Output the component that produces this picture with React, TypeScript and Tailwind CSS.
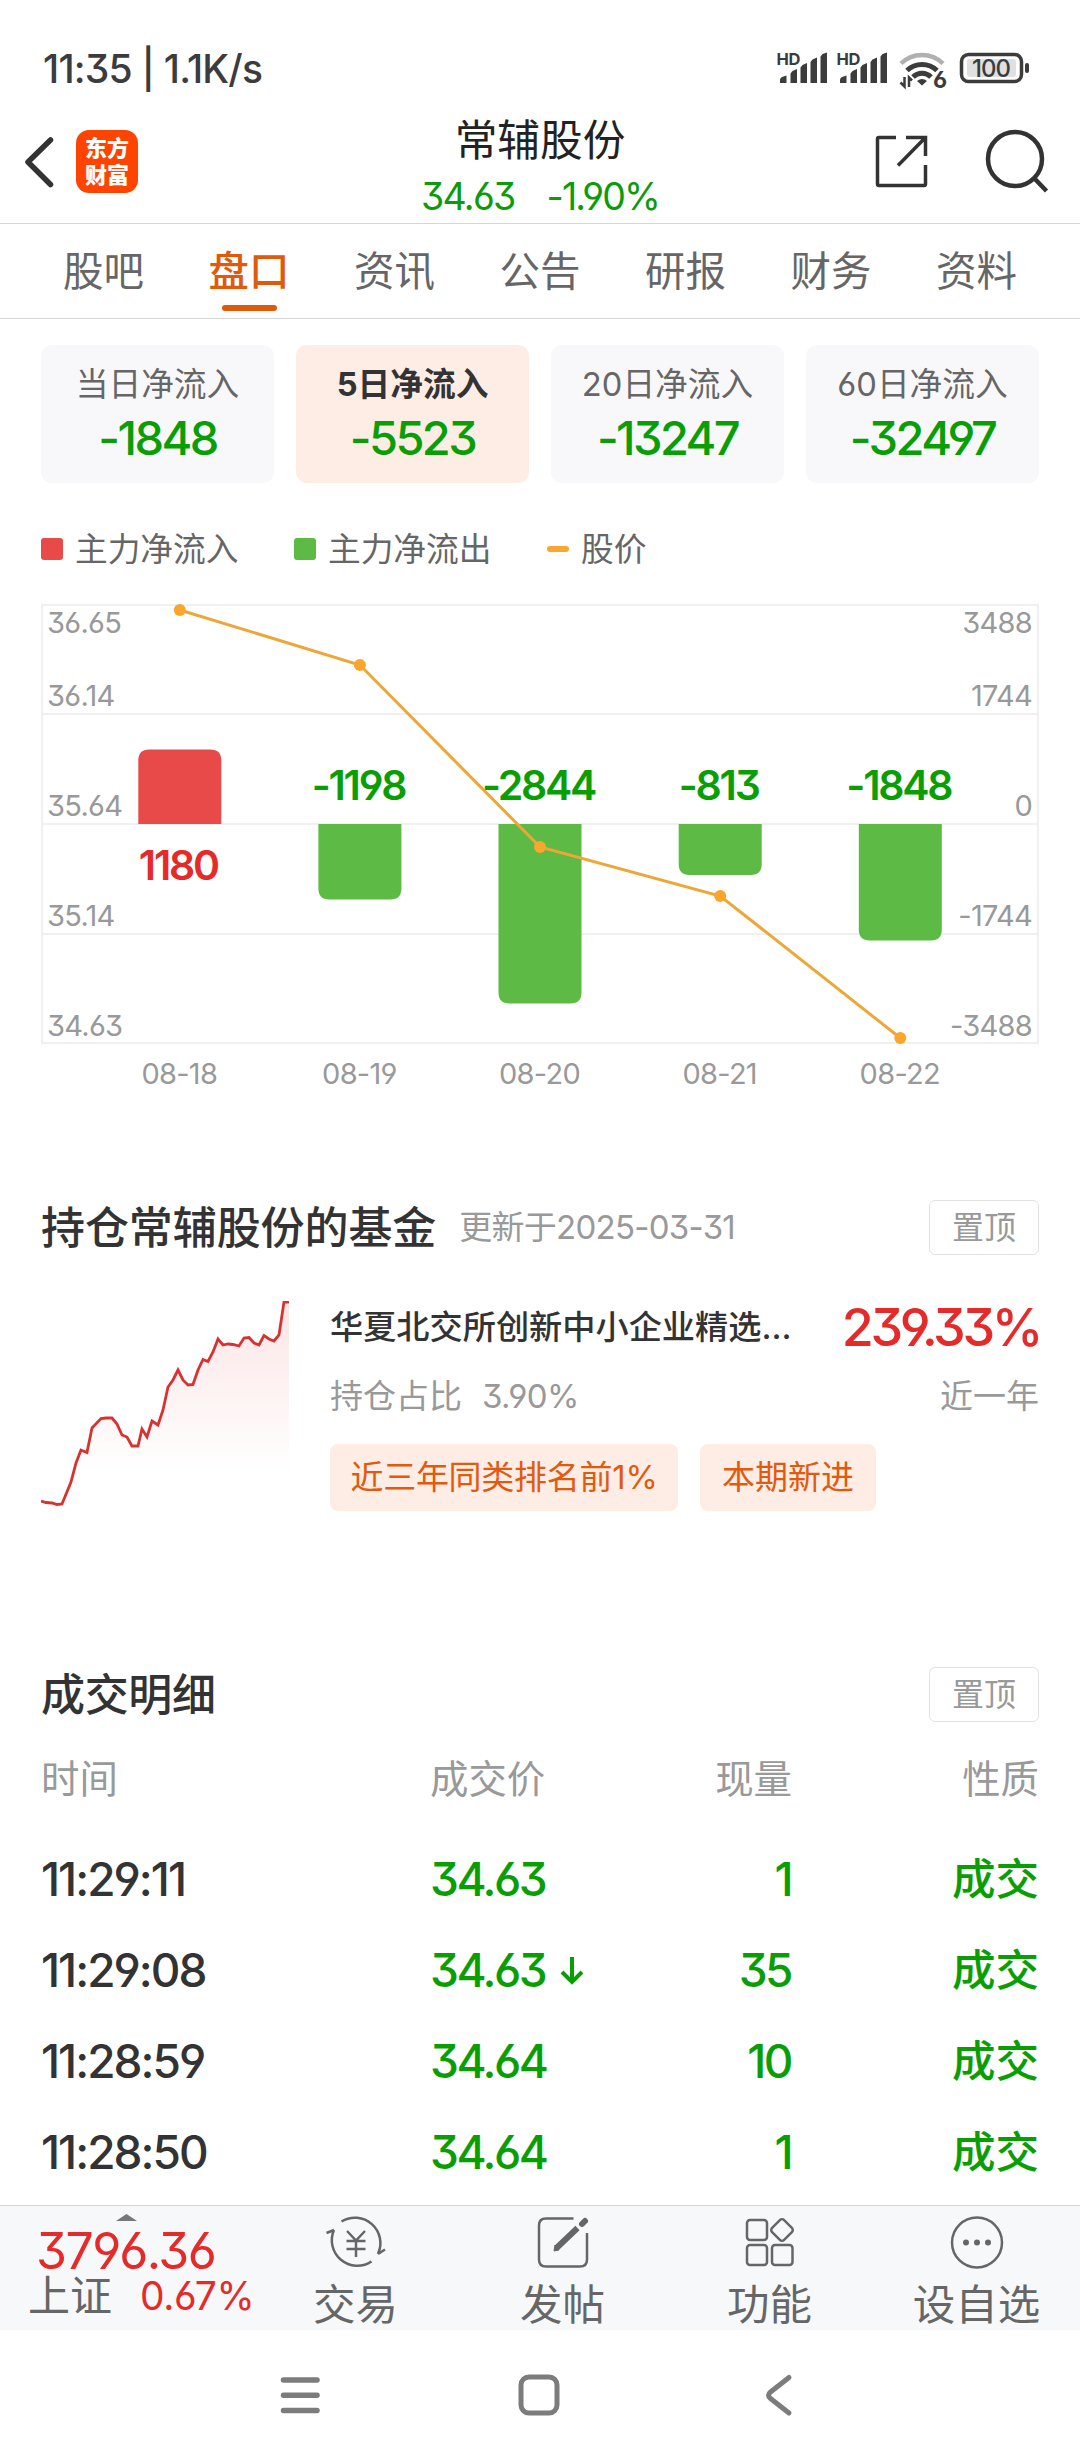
import { clsx } from 'clsx';

const TABS = ['股吧', '盘口', '资讯', '公告', '研报', '财务', '资料'];

const FLOWS = [
  { label: '当日净流入', value: '-1848' },
  { label: '5日净流入', value: '-5523' },
  { label: '20日净流入', value: '-13247' },
  { label: '60日净流入', value: '-32497' },
];

// y is the far end of the bar, price the y of the line point
const BARS = [
  { date: '08-18', value: 1180, x: 138.3, y: 145.5, price: 6 },
  { date: '08-19', value: -1198, x: 318.4, y: 295.5, price: 61 },
  { date: '08-20', value: -2844, x: 498.5, y: 399.5, price: 243 },
  { date: '08-21', value: -813, x: 678.7, y: 271, price: 292 },
  { date: '08-22', value: -1848, x: 858.8, y: 336.5, price: 434 },
];

const AXIS = [
  { left: '36.65', right: '3488', y: 29 },
  { left: '36.14', right: '1744', y: 102 },
  { left: '35.64', right: '0', y: 212 },
  { left: '35.14', right: '-1744', y: 322 },
  { left: '34.63', right: '-3488', y: 432 },
];

const TRADES = [
  { time: '11:29:11', price: '34.63', qty: '1', down: false },
  { time: '11:29:08', price: '34.63', qty: '35', down: true },
  { time: '11:28:59', price: '34.64', qty: '10', down: false },
  { time: '11:28:50', price: '34.64', qty: '1', down: false },
];

const TREND =
  '0,200 5,201.500 11,202 16,203.500 21,203 30,181 35,162 40,149 46,151.500 51,127 60,117.500 65,117 71,117 76,123 81,134 86,136 91,145 97,145 101,128 106,136 111,120 117,124 122,109 127,86 132,79 137,69 142,79 147,84 152,83.500 157,69 162,58.500 167,60.500 172,51 177,38 182,44 187,43 192,43.500 198,45 203,37 208,36.500 213,42 218,44 223,34.500 228,38 233,40 238,34 243,1 248,1';

function Signal() {
  return (
    <svg className="overflow-visible" width="50" height="34" viewBox="0 0 50 34" fill="#3c3c3c">
      <text x="-1.500" y="13.500" className="text-[16.5px] font-bold tracking-[-0.02em]">HD</text>
      <path d="M2 32v-3q0-2 2-3l4.500-1.500V32zM12.500 32V22.500l2-2.500 4.500-2v14zM22.500 32V16.500l2-2.500 4.500-2v20zM32.500 32V11l2-2.500 4.500-2V32zM42.500 32V5.500l2-2.500 4.500-1.500V32z" />
    </svg>
  );
}

function StatusBar() {
  return (
    <div className="flex h-[112px] items-start justify-between pl-[43px] pr-[50px] pt-[51px]">
      <span className="text-[39px] font-medium leading-[36px] tracking-[-0.02em] text-[#3c3c3c]">11:35 | 1.1K/s</span>
      <div className="flex items-start">
        <Signal />
        <div className="w-[10px]" />
        <Signal />
        <svg className="ml-[11px] overflow-visible" width="50" height="40" viewBox="0 0 50 40" fill="none" stroke="#3c3c3c">
          <path d="M2 12.500a30 30 0 0 1 42 0" stroke="#b0b0b0" strokeWidth="4.500" />
          <path d="M8 19.500a21.500 21.500 0 0 1 30 0" strokeWidth="5" />
          <path d="M14 26a12.500 12.500 0 0 1 18 0" strokeWidth="5" />
          <path d="M18 30q5-4 10 0l-5 4.500z" fill="#3c3c3c" stroke="none" />
          <path d="M5.500 26v9.500l-4-4M10 36v-9.500l3 3" strokeWidth="2.500" />
          <text x="34" y="37" className="text-[23px] font-bold" fill="#3c3c3c" stroke="#fff" strokeWidth="3" paintOrder="stroke">6</text>
        </svg>
        <svg className="ml-[10px]" width="71" height="34" viewBox="0 0 71 34">
          <rect x="2.500" y="3.500" width="60" height="27" rx="7" fill="none" stroke="#3c3c3c" strokeWidth="3.500" />
          <rect x="8" y="8" width="49" height="18" rx="3" fill="#e0e0e0" />
          <rect x="66" y="12" width="4" height="10" rx="2" fill="#3c3c3c" />
          <text x="32" y="25.500" textAnchor="middle" className="text-[24px] font-medium tracking-[-0.04em]" fill="#3c3c3c">100</text>
        </svg>
      </div>
    </div>
  );
}

function Header() {
  return (
    <header className="flex h-[112px] items-start border-b border-[#d6d6d6] pl-[22px]">
      <svg className="mt-[22px]" width="36" height="56" viewBox="0 0 36 56" fill="none" stroke="#333" strokeWidth="5.500" strokeLinecap="round" strokeLinejoin="round">
        <path d="M28.500 6 6 28l22.500 22.500" />
      </svg>
      <div className="ml-[18px] mt-[18px] flex h-[63px] w-[62px] flex-col items-center justify-center rounded-[13px] bg-[#ff4400] text-[22px] font-black leading-[27px] text-white">
        <span>东方</span>
        <span>财富</span>
      </div>
      <div className="flex flex-1 flex-col items-center pl-[69px]">
        <h1 className="mt-[7px] text-[42.7px] leading-[44px] text-[#222]">常辅股份</h1>
        <div className="mt-[15px] flex gap-[32px] text-[37.5px] leading-[38px] text-[#0b9b0b]">
          <span className="tracking-[-0.045em]">34.63</span>
          <span className="tracking-[-0.05em]">-1.90%</span>
        </div>
      </div>
      <svg className="mr-[-1px] mt-[22px]" width="56" height="56" viewBox="0 0 56 56" fill="none" stroke="#333" strokeWidth="3.500">
        <path d="M23 3.500H6q-1.500 0-1.500 1.500v45q0 1.500 1.500 1.500h45q1.500 0 1.500-1.500V31M33 3.500h19.500V22M51 5 25 31.500" />
      </svg>
      <svg className="ml-[56px] mr-[26px] mt-[16px]" width="70" height="68" viewBox="0 0 70 68" fill="none" stroke="#333" strokeWidth="4.500">
        <circle cx="31" cy="31" r="27" />
        <path d="m50 50 12.500 13" />
      </svg>
    </header>
  );
}

function Tabs() {
  return (
    <nav className="flex h-[95px] justify-between border-b border-[#d6d6d6] px-[31px]">
      {TABS.map((tab, i) => (
        <div key={tab} className="flex w-[145px] flex-col items-center pt-[26px]">
          <span className={clsx('text-[40.5px] leading-[44px]', i === 1 ? 'font-medium text-[#df5a0b]' : 'text-[#666]')}>{tab}</span>
          {i === 1 && <div className="mt-[11px] h-[6px] w-[55px] rounded-full bg-[#df5a0b]" />}
        </div>
      ))}
    </nav>
  );
}

function FlowCards() {
  return (
    <div className="mx-[41px] mt-[26px] grid grid-cols-4 gap-[22px]">
      {FLOWS.map((f, i) => (
        <div key={f.label} className={clsx('flex h-[138px] flex-col items-center rounded-[11px] pt-[19px]', i === 1 ? 'bg-[#feede5]' : 'bg-[#f8f8fb]')}>
          <span className={clsx('text-[32.7px] leading-[40px]', i === 1 ? 'font-bold text-[#333]' : 'text-[#666]')}>{f.label}</span>
          <span className="mt-[7px] text-[47px] font-medium leading-[54px] tracking-[-0.055em] text-[#0a9e05]">{f.value}</span>
        </div>
      ))}
    </div>
  );
}

function Legend() {
  return (
    <div className="ml-[41px] mt-[46px] flex h-[40px] items-center text-[32.7px] leading-[40px] text-[#666]">
      <div className="mr-[12px] h-[22px] w-[22px] rounded-[3px] bg-[#e84a4a]" />
      <span className="w-[219px]">主力净流入</span>
      <div className="mr-[12px] h-[22px] w-[22px] rounded-[3px] bg-[#5cba45]" />
      <span className="w-[219px]">主力净流出</span>
      <div className="mr-[12px] h-[6px] w-[22px] rounded-full bg-[#faa632]" />
      <span>股价</span>
    </div>
  );
}

// The svg starts at the left page edge, its y = 0 is the top of the plot
function FlowChart() {
  return (
    <svg className="mt-[35px] block overflow-visible" width="1080" height="500" viewBox="0 0 1080 500">
      <g fill="none" stroke="#f0f0f0" strokeWidth="2">
        <rect x="42" y="1" width="996" height="438" />
        <path d="M42 110h996M42 220h996M42 330h996" />
      </g>
      <g fill="#999" className="text-[29px] tracking-[-0.025em]">
        {AXIS.map((a) => (
          <g key={a.left}>
            <text x="47" y={a.y}>{a.left}</text>
            <text x="1032" y={a.y} textAnchor="end">{a.right}</text>
          </g>
        ))}
        {BARS.map((b) => (
          <text key={b.date} x={b.x + 41} y="480" textAnchor="middle">{b.date}</text>
        ))}
      </g>
      {BARS.map((b) =>
        b.value > 0 ? (
          <path key={b.date} d={`M${b.x} 220V${b.y + 11}q0-11 11-11h61q11 0 11 11V220z`} fill="#e84a4a" />
        ) : (
          <path key={b.date} d={`M${b.x} 220V${b.y - 11}q0 11 11 11h61q11 0 11-11V220z`} fill="#5cba45" />
        ),
      )}
      {BARS.map((b) => (
        <text
          key={b.date}
          x={b.x + 40}
          y={b.value > 0 ? 275.5 : 196}
          textAnchor="middle"
          className="text-[41px] font-semibold tracking-[-0.055em]"
          fill={b.value > 0 ? '#e52a2a' : '#0a9e05'}
        >
          {b.value}
        </text>
      ))}
      <polyline points={BARS.map((b) => `${b.x + 41.5},${b.price}`).join(' ')} fill="none" stroke="#eda738" strokeWidth="3" />
      {BARS.map((b) => (
        <circle key={b.date} cx={b.x + 41.5} cy={b.price} r="6" fill="#faa52c" />
      ))}
    </svg>
  );
}

function PinButton() {
  return (
    <button className="ml-auto h-[55px] w-[110px] rounded-[6px] border border-[#e2e2e2] text-[32px] leading-[52px] text-[#999]">置顶</button>
  );
}

function FundSection() {
  return (
    <section className="px-[41px] pt-[96px]">
      <div className="flex h-[55px] items-center">
        <h2 className="text-[44px] font-medium leading-[50px] tracking-[-0.002em] text-[#333]">持仓常辅股份的基金</h2>
        <span className="ml-[23px] text-[33px] tracking-[-0.022em] text-[#999]">更新于2025-03-31</span>
        <PinButton />
      </div>
      <div className="mt-[45px] flex">
        <svg className="mt-[1px] w-[249px] shrink-0" height="206" viewBox="0 0 249 206">
          <defs>
            <linearGradient id="trend" x1="0" y1="0" x2="0" y2="1">
              <stop offset="0" stopColor="#e52a2a" stopOpacity="0.12" />
              <stop offset="0.85" stopColor="#e52a2a" stopOpacity="0" />
            </linearGradient>
          </defs>
          <polygon points={`${TREND} 248,204 0,204`} fill="url(#trend)" />
          <polyline points={TREND} fill="none" stroke="#d93030" strokeWidth="2.800" />
        </svg>
        <div className="ml-[40px] flex-1">
          <div className="flex h-[56px] items-center justify-between">
            <span className="text-[33.2px] font-medium text-[#333]">华夏北交所创新中小企业精选...</span>
            <span className="mr-[-1px] text-[52px] font-medium leading-[54px] tracking-[-0.065em] text-[#e52a2a]">239.33%</span>
          </div>
          <div className="mt-[19px] flex h-[44px] items-center justify-between text-[33px] text-[#999]">
            <span>持仓占比<span className="ml-[20px] tracking-[-0.02em]">3.90%</span></span>
            <span>近一年</span>
          </div>
          <div className="mt-[25px] flex gap-[22px] text-[33px] leading-[67px] text-[#e2590f]">
            <span className="h-[67px] w-[348px] rounded-[8px] bg-[#fdede4] text-center tracking-[-0.008em]">近三年同类排名前1%</span>
            <span className="h-[67px] w-[176px] rounded-[8px] bg-[#fdede4] text-center">本期新进</span>
          </div>
        </div>
      </div>
    </section>
  );
}

function TradeSection() {
  return (
    <section className="px-[41px] pt-[156px]">
      <div className="flex h-[55px] items-center">
        <h2 className="text-[44px] font-medium leading-[50px] tracking-[-0.008em] text-[#333]">成交明细</h2>
        <PinButton />
      </div>
      <div className="mt-[35px] grid h-[44px] grid-cols-[389px_160px_202px_247px] text-[38.4px] leading-[44px] text-[#999]">
        <span>时间</span>
        <span>成交价</span>
        <span className="text-right">现量</span>
        <span className="text-right">性质</span>
      </div>
      <div className="mt-[33px]">
        {TRADES.map((t) => (
          <div key={t.time} className="grid h-[91px] grid-cols-[389px_160px_202px_247px] items-center text-[46px] font-medium text-[#0a9e05]">
            <span className="tracking-[-0.043em] text-[#333]">{t.time}</span>
            <span className="flex items-center tracking-[-0.055em]">
              {t.price}
              {t.down && (
                <svg className="ml-[15px] shrink-0" width="24" height="30" viewBox="0 0 24 30" fill="none" stroke="#0a9e05" strokeWidth="4">
                  <path d="M12 1v24M2 16l10 10 10-10" />
                </svg>
              )}
            </span>
            <span className="pr-px text-right tracking-[-0.055em]">{t.qty}</span>
            <span className="text-right text-[43.5px]">成交</span>
          </div>
        ))}
      </div>
    </section>
  );
}

function TradeIcon() {
  return (
    <svg width="62" height="56" viewBox="0 0 62 56" fill="none" stroke="#666" strokeWidth="2.500">
      <path d="M16.500 7.500A25.500 25.500 0 0 1 53 40M53 40l7-4.500M53 40l2-6" />
      <path d="M46.500 47.500A25.500 25.500 0 0 1 9 16M1.500 19 9 16" />
      <path d="m22 17 9 9.500 9-9.500M31 26.500V43M21.500 27h19M21.500 35h19" />
    </svg>
  );
}

function PostIcon() {
  return (
    <svg width="56" height="56" viewBox="0 0 56 56" fill="none" stroke="#666" strokeWidth="2.500">
      <path d="M38.500 4.500H11q-7 0-7 7v34q0 7 7 7h34q7 0 7-7V19" />
      <path d="m42.500 14-21 20" strokeWidth="6" />
      <path d="m20 31-1 6 5-1z" fill="#666" strokeWidth="1" />
      <path d="m47 10 3-3" strokeWidth="6" strokeLinecap="round" />
    </svg>
  );
}

function GridIcon() {
  return (
    <svg width="56" height="56" viewBox="0 0 56 56" fill="none" stroke="#666" strokeWidth="2.500">
      <rect x="5" y="6" width="20" height="20" rx="3" />
      <rect x="5" y="31" width="20" height="20" rx="3" />
      <rect x="30" y="31" width="20.500" height="20" rx="3" />
      <rect x="31.500" y="7.500" width="17" height="17" rx="3" transform="rotate(45 40 16)" />
    </svg>
  );
}

function MoreIcon() {
  return (
    <svg width="56" height="56" viewBox="0 0 56 56" fill="#666">
      <circle cx="28" cy="28.500" r="25" fill="none" stroke="#666" strokeWidth="2.500" />
      <circle cx="17" cy="28.500" r="3" />
      <circle cx="28" cy="28.500" r="3" />
      <circle cx="39" cy="28.500" r="3" />
    </svg>
  );
}

const ACTIONS = [
  { label: '交易', icon: <TradeIcon /> },
  { label: '发帖', icon: <PostIcon /> },
  { label: '功能', icon: <GridIcon /> },
  { label: '设自选', icon: <MoreIcon /> },
];

function BottomBar() {
  return (
    <footer className="flex h-[125px] border-t border-[#d6d6d6] bg-[#f7f8fa]">
      <div className="w-[252px] pt-[8px]">
        <svg className="ml-[116px] block" width="21" height="7" viewBox="0 0 21 7">
          <path d="M0 7 10.500 0 21 7z" fill="#777" />
        </svg>
        <div className="mt-[8px] pl-[36px] text-[50px] leading-[44px] tracking-[-0.03em] text-[#e52a2a]">3796.36</div>
        <div className="flex items-center pl-[28px] leading-[46px]">
          <span className="text-[42px] text-[#666]">上证</span>
          <span className="ml-[28px] text-[39px] tracking-[-0.01em] text-[#e52a2a]">0.67%</span>
        </div>
      </div>
      <div className="flex">
        {ACTIONS.map((a) => (
          <div key={a.label} className="flex w-[207px] flex-col items-center pt-[8px]">
            {a.icon}
            <span className="mt-[13px] text-[42.5px] leading-[44px] text-[#666]">{a.label}</span>
          </div>
        ))}
      </div>
    </footer>
  );
}

function SystemNav() {
  return (
    <div className="flex h-[130px] items-start pl-[278px] pt-[42px]">
      <svg width="44" height="46" viewBox="0 0 44 46" stroke="#7c7c7c" strokeWidth="5.500" strokeLinecap="round">
        <path d="M5.500 8h33.500M5.500 23.200h33.500M5.500 38.500h33.500" />
      </svg>
      <svg className="ml-[194px]" width="46" height="46" viewBox="0 0 46 46" fill="none" stroke="#7c7c7c" strokeWidth="5">
        <rect x="5" y="5" width="36" height="36" rx="8" />
      </svg>
      <svg className="ml-[200px]" width="34" height="46" viewBox="0 0 34 46" fill="none" stroke="#7c7c7c" strokeWidth="5" strokeLinecap="round" strokeLinejoin="round">
        <path d="M27 5.500 8.500 20q-4 3.200 0 6.500L27 41" />
      </svg>
    </div>
  );
}

export default function App() {
  return (
    <div className="flex h-[2460px] w-[1080px] flex-col overflow-hidden bg-white font-['Inter','Noto_Sans_CJK_SC',sans-serif] [font-feature-settings:'cv03','cv04','cv09'] whitespace-nowrap">
      <StatusBar />
      <Header />
      <Tabs />
      <main className="flex-1">
        <FlowCards />
        <Legend />
        <FlowChart />
        <FundSection />
        <TradeSection />
      </main>
      <BottomBar />
      <SystemNav />
    </div>
  );
}
